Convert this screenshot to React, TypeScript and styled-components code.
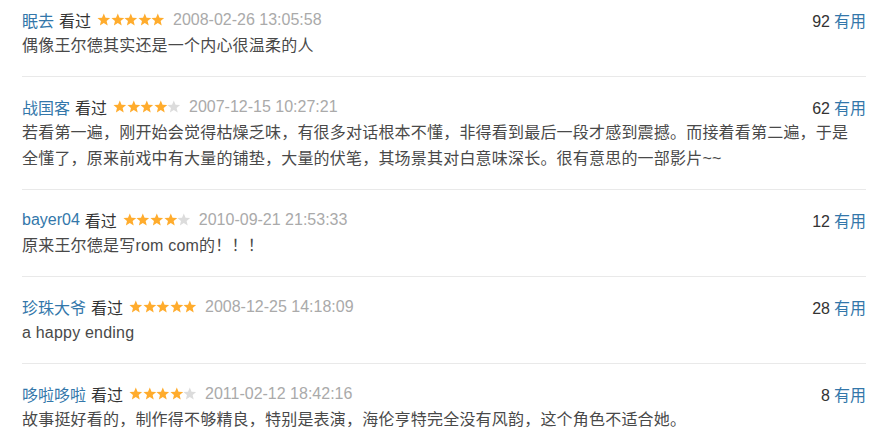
import React from "react";
import styled, { createGlobalStyle } from "styled-components";

const GlobalStyle = createGlobalStyle`
  html, body { margin: 0; padding: 0; background: #fff; }
  body {
    font-family: "Liberation Sans", Arial, "Noto Sans CJK SC", sans-serif;
    color: #494949;
  }
`;

const List = styled.div`
  padding: 7px 22px 0 22px;
  width: 844px;
`;

const Item = styled.div`
  padding: 17px 0 17px;
  border-bottom: 1px solid #e9e9e9;
  &:first-child { padding-top: 0; }
  &:last-child { border-bottom: none; }
`;

const Header = styled.div`
  display: flex;
  align-items: center;
  height: 26px;
  font-size: 16px;
`;

const Name = styled.a`
  color: #3377aa;
  text-decoration: none;
`;

const Watched = styled.span`
  color: #333;
  margin-left: 5px;
`;

const Stars = styled.span`
  display: inline-flex;
  margin-left: 6px;
`;

const Time = styled.span`
  color: #aaa;
  font-size: 16px;
  margin-left: 8px;
`;

const Votes = styled.span`
  margin-left: auto;
  color: #333;
  font-size: 16px;
`;

const Useful = styled.a`
  color: #3377aa;
  margin-left: 4px;
  text-decoration: none;
`;

const Text = styled.p`
  margin: 0;
  padding-right: 16px;
  font-size: 16px;
  letter-spacing: 0.2px;
  line-height: 26px;
  color: #494949;
`;

const Star: React.FC<{ on: boolean }> = ({ on }) => (
  <svg width="13.6" height="13.4" viewBox="0 0 24 23">
    <polygon
      points="12,0.5 15.1,8 23.2,8.6 17,13.9 18.9,21.8 12,17.5 5.1,21.8 7,13.9 0.8,8.6 8.9,8"
      fill={on ? "#ffac2d" : "#dcdcdc"}
    />
  </svg>
);

type Review = { name: string; rating: number; time: string; votes: number; text: string };

const reviews: Review[] = [
  { name: "眠去", rating: 5, time: "2008-02-26 13:05:58", votes: 92, text: "偶像王尔德其实还是一个内心很温柔的人" },
  {
    name: "战国客",
    rating: 4,
    time: "2007-12-15 10:27:21",
    votes: 62,
    text: "若看第一遍，刚开始会觉得枯燥乏味，有很多对话根本不懂，非得看到最后一段才感到震撼。而接着看第二遍，于是全懂了，原来前戏中有大量的铺垫，大量的伏笔，其场景其对白意味深长。很有意思的一部影片~~",
  },
  { name: "bayer04", rating: 4, time: "2010-09-21 21:53:33", votes: 12, text: "原来王尔德是写rom com的！！！" },
  { name: "珍珠大爷", rating: 5, time: "2008-12-25 14:18:09", votes: 28, text: "a happy ending" },
  {
    name: "哆啦哆啦",
    rating: 4,
    time: "2011-02-12 18:42:16",
    votes: 8,
    text: "故事挺好看的，制作得不够精良，特别是表演，海伦亨特完全没有风韵，这个角色不适合她。",
  },
];

export default function App() {
  return (
    <>
      <GlobalStyle />
      <List>
        {reviews.map((r) => (
          <Item key={r.name}>
            <Header>
              <Name href="#">{r.name}</Name>
              <Watched>看过</Watched>
              <Stars>
                {[0, 1, 2, 3, 4].map((i) => (
                  <Star key={i} on={i < r.rating} />
                ))}
              </Stars>
              <Time>{r.time}</Time>
              <Votes>
                {r.votes}
                <Useful href="#">有用</Useful>
              </Votes>
            </Header>
            <Text>{r.text}</Text>
          </Item>
        ))}
      </List>
    </>
  );
}
